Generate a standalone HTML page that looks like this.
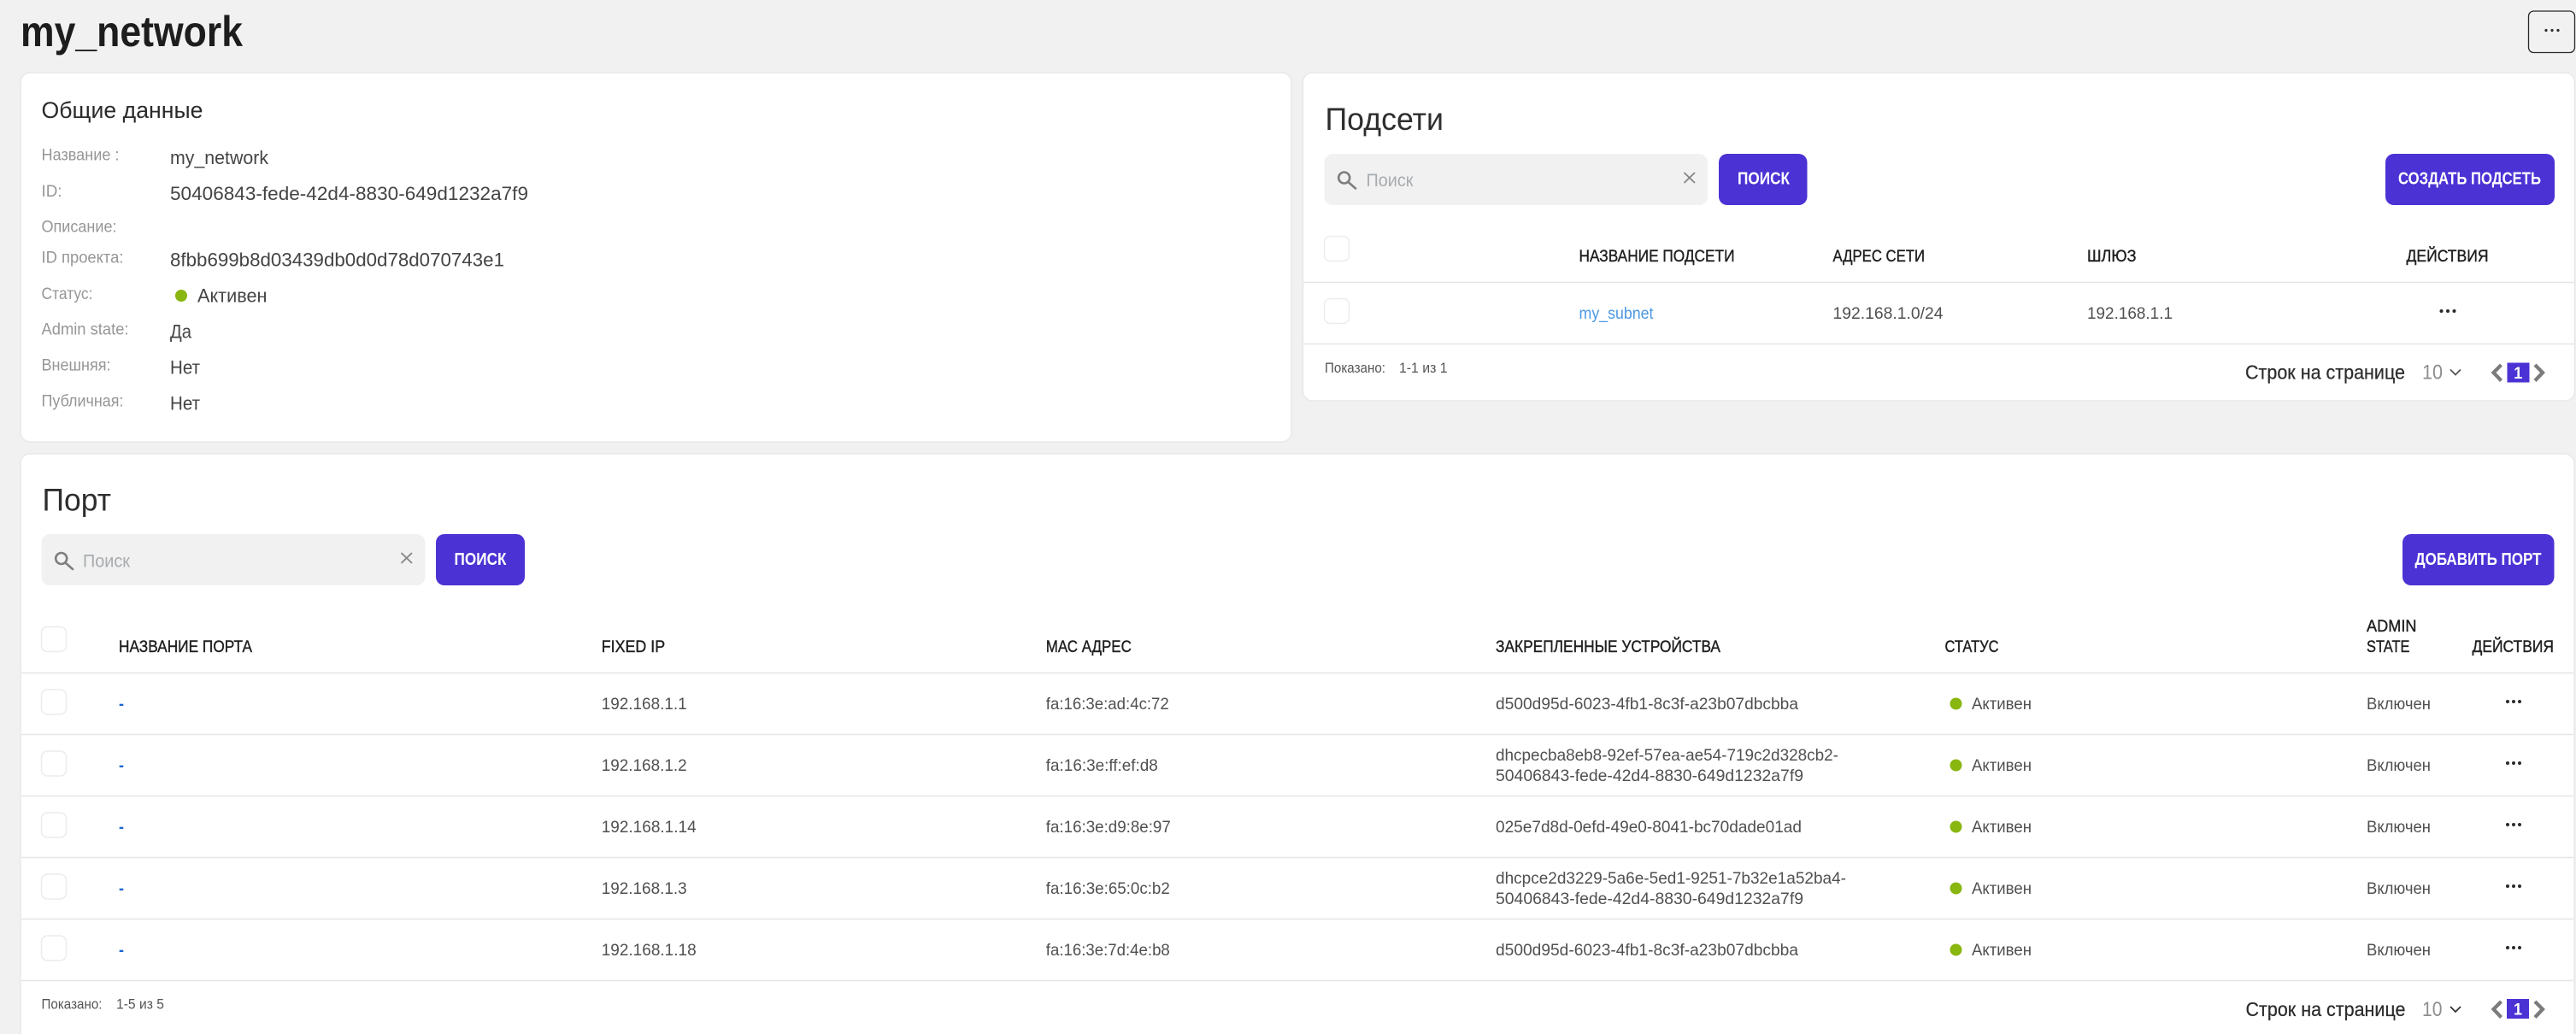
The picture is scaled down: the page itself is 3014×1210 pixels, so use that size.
<!DOCTYPE html>
<html lang="ru">
<head>
<meta charset="utf-8">
<title>my_network</title>
<style>
html,body{margin:0;padding:0;width:3014px;height:1210px;overflow:hidden;background:#f1f1f1}
svg{display:block}
text{font-family:"Liberation Sans","DejaVu Sans",sans-serif;white-space:pre}
.h1{font-size:50px;font-weight:700;fill:#1d1d1d}
.h2{font-size:27px;fill:#2a2a2a}
.h3{font-size:37px;fill:#2e2e2e}
.lb{font-size:19.5px;fill:#969696}
.v{font-size:22px;fill:#444}
.t{font-size:19.5px;fill:#505050}
.th{font-size:19.5px;fill:#1f1f1f;stroke:#1f1f1f;stroke-width:.4px}
.btn{font-size:20px;font-weight:700;fill:#fff}
.ph{font-size:21px;fill:#a8acaf}
.ft{font-size:17px;fill:#555}
.rows{font-size:23.5px;fill:#2c2c2c;stroke:#2c2c2c;stroke-width:.25px}
.n10{font-size:24px;fill:#8e8e8e}
.pg{font-size:19px;font-weight:700;fill:#fff}
.a{font-size:19.5px;fill:#4a98e4}
.dash{font-size:19px;font-weight:700;fill:#1a66d0}
.card{fill:#fff;stroke:#e8e8e8;stroke-width:1.5}
.ln{stroke:#e6e6e6;stroke-width:1.6}
.cb{fill:#fff;stroke:#ececec;stroke-width:1.5}
.sb{fill:#f1f1f1}
.pb{fill:#4b32d4}
.dot{fill:#89b60f}
.i{fill:none;stroke:#7e7e7e;stroke-width:2.6}
.ch{fill:none;stroke:#7b7b7b;stroke-width:4.2}
.dd{fill:#2a2a2a}
</style>
</head>
<body>
<svg xmlns="http://www.w3.org/2000/svg" width="3014" height="1210" viewBox="0 0 3014 1210">
<rect width="3014" height="1210" fill="#f1f1f1"/>

<text class="h1" x="24" y="54" textLength="260" lengthAdjust="spacingAndGlyphs">my_network</text>
<rect x="2958.5" y="13" width="54" height="48.5" rx="6" fill="none" stroke="#2a2a2a" stroke-width="1.3"/>
<circle class="dd" cx="2979" cy="35.5" r="1.6"/><circle class="dd" cx="2986" cy="35.5" r="1.6"/><circle class="dd" cx="2993" cy="35.5" r="1.6"/>

<!-- General card -->
<rect class="card" x="24" y="85" width="1487" height="432" rx="11"/>
<text class="h2" x="48.5" y="138" textLength="189" lengthAdjust="spacingAndGlyphs">Общие данные</text>
<text class="lb" x="48.5" y="187.5" textLength="91" lengthAdjust="spacingAndGlyphs">Название :</text>
<text class="lb" x="48.5" y="230" textLength="24" lengthAdjust="spacingAndGlyphs">ID:</text>
<text class="lb" x="48.5" y="271.5" textLength="88" lengthAdjust="spacingAndGlyphs">Описание:</text>
<text class="lb" x="48.5" y="307.5" textLength="96" lengthAdjust="spacingAndGlyphs">ID проекта:</text>
<text class="lb" x="48.5" y="350" textLength="60" lengthAdjust="spacingAndGlyphs">Статус:</text>
<text class="lb" x="48.5" y="391.5" textLength="102" lengthAdjust="spacingAndGlyphs">Admin state:</text>
<text class="lb" x="48.5" y="433.5" textLength="81" lengthAdjust="spacingAndGlyphs">Внешняя:</text>
<text class="lb" x="48.5" y="475.5" textLength="96" lengthAdjust="spacingAndGlyphs">Публичная:</text>
<text class="v" x="199" y="192" textLength="115" lengthAdjust="spacingAndGlyphs">my_network</text>
<text class="v" x="199" y="234" textLength="419" lengthAdjust="spacingAndGlyphs">50406843-fede-42d4-8830-649d1232a7f9</text>
<text class="v" x="199" y="311.5" textLength="391" lengthAdjust="spacingAndGlyphs">8fbb699b8d03439db0d0d78d070743e1</text>
<circle class="dot" cx="212" cy="346" r="7"/>
<text class="v" x="231" y="353.5" textLength="81.5" lengthAdjust="spacingAndGlyphs">Активен</text>
<text class="v" x="199" y="395.5" textLength="25" lengthAdjust="spacingAndGlyphs">Да</text>
<text class="v" x="199" y="437.5" textLength="35" lengthAdjust="spacingAndGlyphs">Нет</text>
<text class="v" x="199" y="479.5" textLength="35" lengthAdjust="spacingAndGlyphs">Нет</text>

<!-- Subnets card -->
<rect class="card" x="1524.5" y="85" width="1488" height="384" rx="11"/>
<text class="h3" x="1550.5" y="152" textLength="138.5" lengthAdjust="spacingAndGlyphs">Подсети</text>
<rect class="sb" x="1549.5" y="180" width="448.5" height="60" rx="10"/>
<circle class="i" cx="1572.7" cy="208" r="6.5"/><path class="i" d="M1577.5 213L1586 220.5" stroke-linecap="round"/>
<text class="ph" x="1598.5" y="218" textLength="55" lengthAdjust="spacingAndGlyphs">Поиск</text>
<path d="M1970.5 202L1983 214M1983 202L1970.5 214" fill="none" stroke="#848484" stroke-width="1.8"/>
<rect class="pb" x="2011" y="180" width="103.5" height="60" rx="10"/>
<text class="btn" x="2033" y="215.5" textLength="61" lengthAdjust="spacingAndGlyphs">ПОИСК</text>
<rect class="pb" x="2791" y="180" width="198" height="60" rx="10"/>
<text class="btn" x="2806" y="215.5" textLength="167" lengthAdjust="spacingAndGlyphs">СОЗДАТЬ ПОДСЕТЬ</text>
<rect class="cb" x="1549.5" y="276.5" width="29" height="29" rx="7"/>
<text class="th" x="1847.5" y="306" textLength="182" lengthAdjust="spacingAndGlyphs">НАЗВАНИЕ ПОДСЕТИ</text>
<text class="th" x="2144.5" y="306" textLength="107.5" lengthAdjust="spacingAndGlyphs">АДРЕС СЕТИ</text>
<text class="th" x="2442" y="306" textLength="57.5" lengthAdjust="spacingAndGlyphs">ШЛЮЗ</text>
<text class="th" x="2815.5" y="306" textLength="96" lengthAdjust="spacingAndGlyphs">ДЕЙСТВИЯ</text>
<path class="ln" d="M1525 330.5H3012M1525 402.5H3012"/>
<rect class="cb" x="1549.5" y="349.5" width="29" height="29" rx="7"/>
<text class="a" x="1847.5" y="373" textLength="87" lengthAdjust="spacingAndGlyphs">my_subnet</text>
<text class="t" x="2144.5" y="373" textLength="129" lengthAdjust="spacingAndGlyphs">192.168.1.0/24</text>
<text class="t" x="2442" y="373" textLength="100" lengthAdjust="spacingAndGlyphs">192.168.1.1</text>
<circle class="dd" cx="2856.5" cy="364" r="2"/><circle class="dd" cx="2864" cy="364" r="2"/><circle class="dd" cx="2871.5" cy="364" r="2"/>
<text class="ft" x="1550" y="436" textLength="71" lengthAdjust="spacingAndGlyphs">Показано:</text>
<text class="ft" x="1637" y="436" textLength="56.5" lengthAdjust="spacingAndGlyphs">1-1 из 1</text>
<text class="rows" x="2627" y="443.5" textLength="187" lengthAdjust="spacingAndGlyphs">Строк на странице</text>
<text class="n10" x="2834" y="443.5" textLength="24" lengthAdjust="spacingAndGlyphs">10</text>
<path d="M2867 432.5L2873 438.5L2879 432.5" fill="none" stroke="#555" stroke-width="1.8"/>
<path class="ch" d="M2926.5 427L2917.5 436L2926.5 445.5"/>
<rect class="pb" x="2933.5" y="424.5" width="26" height="23"/>
<text class="pg" x="2941.2" y="443" textLength="10" lengthAdjust="spacingAndGlyphs">1</text>
<path class="ch" d="M2966 427L2975 436L2966 445.5"/>

<!-- Port card -->
<path class="card" d="M24 1225V542a11 11 0 0 1 11-11H3001a11 11 0 0 1 11 11V1225Z"/>
<text class="h3" x="49.5" y="597.5" textLength="80.5" lengthAdjust="spacingAndGlyphs">Порт</text>
<rect class="sb" x="48.5" y="625" width="449" height="60" rx="10"/>
<circle class="i" cx="71.7" cy="653.5" r="6.5"/><path class="i" d="M76.5 658.5L85 666" stroke-linecap="round"/>
<text class="ph" x="97" y="663.5" textLength="55" lengthAdjust="spacingAndGlyphs">Поиск</text>
<path d="M469.5 647L482 659M482 647L469.5 659" fill="none" stroke="#848484" stroke-width="1.8"/>
<rect class="pb" x="510" y="625" width="104" height="60" rx="10"/>
<text class="btn" x="531.5" y="661" textLength="61" lengthAdjust="spacingAndGlyphs">ПОИСК</text>
<rect class="pb" x="2811" y="625" width="177.5" height="60" rx="10"/>
<text class="btn" x="2825.5" y="661" textLength="148" lengthAdjust="spacingAndGlyphs">ДОБАВИТЬ ПОРТ</text>

<rect class="cb" x="48.5" y="733.5" width="29" height="29" rx="7"/>
<text class="th" x="139" y="763" textLength="156" lengthAdjust="spacingAndGlyphs">НАЗВАНИЕ ПОРТА</text>
<text class="th" x="703.7" y="763" textLength="74.5" lengthAdjust="spacingAndGlyphs">FIXED IP</text>
<text class="th" x="1223.8" y="763" textLength="100" lengthAdjust="spacingAndGlyphs">МАС АДРЕС</text>
<text class="th" x="1750" y="763" textLength="263" lengthAdjust="spacingAndGlyphs">ЗАКРЕПЛЕННЫЕ УСТРОЙСТВА</text>
<text class="th" x="2275.5" y="763" textLength="63" lengthAdjust="spacingAndGlyphs">СТАТУС</text>
<text class="th" x="2769" y="739" textLength="58.5" lengthAdjust="spacingAndGlyphs">ADMIN</text>
<text class="th" x="2769" y="763" textLength="50.5" lengthAdjust="spacingAndGlyphs">STATE</text>
<text class="th" x="2892.5" y="763" textLength="95.5" lengthAdjust="spacingAndGlyphs">ДЕЙСТВИЯ</text>
<path class="ln" d="M25 787.5H3011M25 859.5H3011M25 931.5H3011M25 1003.5H3011M25 1075.5H3011M25 1147.5H3011"/>

<!-- row 1 -->
<rect class="cb" x="48.5" y="807" width="29" height="29" rx="7"/>
<text class="dash" x="139" y="830" textLength="6" lengthAdjust="spacingAndGlyphs">-</text>
<text class="t" x="703.7" y="830" textLength="100" lengthAdjust="spacingAndGlyphs">192.168.1.1</text>
<text class="t" x="1223.8" y="830" textLength="144" lengthAdjust="spacingAndGlyphs">fa:16:3e:ad:4c:72</text>
<text class="t" x="1750" y="830" textLength="354" lengthAdjust="spacingAndGlyphs">d500d95d-6023-4fb1-8c3f-a23b07dbcbba</text>
<circle class="dot" cx="2288.5" cy="823.5" r="7"/>
<text class="t" x="2307" y="830" textLength="70" lengthAdjust="spacingAndGlyphs">Активен</text>
<text class="t" x="2769" y="830" textLength="75" lengthAdjust="spacingAndGlyphs">Включен</text>
<circle class="dd" cx="2934" cy="821" r="2"/><circle class="dd" cx="2941" cy="821" r="2"/><circle class="dd" cx="2948" cy="821" r="2"/>

<!-- row 2 -->
<rect class="cb" x="48.5" y="879" width="29" height="29" rx="7"/>
<text class="dash" x="139" y="902" textLength="6" lengthAdjust="spacingAndGlyphs">-</text>
<text class="t" x="703.7" y="902" textLength="100" lengthAdjust="spacingAndGlyphs">192.168.1.2</text>
<text class="t" x="1223.8" y="902" textLength="131" lengthAdjust="spacingAndGlyphs">fa:16:3e:ff:ef:d8</text>
<text class="t" x="1750" y="890" textLength="401" lengthAdjust="spacingAndGlyphs">dhcpecba8eb8-92ef-57ea-ae54-719c2d328cb2-</text>
<text class="t" x="1750" y="914" textLength="360" lengthAdjust="spacingAndGlyphs">50406843-fede-42d4-8830-649d1232a7f9</text>
<circle class="dot" cx="2288.5" cy="895.5" r="7"/>
<text class="t" x="2307" y="902" textLength="70" lengthAdjust="spacingAndGlyphs">Активен</text>
<text class="t" x="2769" y="902" textLength="75" lengthAdjust="spacingAndGlyphs">Включен</text>
<circle class="dd" cx="2934" cy="893" r="2"/><circle class="dd" cx="2941" cy="893" r="2"/><circle class="dd" cx="2948" cy="893" r="2"/>

<!-- row 3 -->
<rect class="cb" x="48.5" y="951" width="29" height="29" rx="7"/>
<text class="dash" x="139" y="974" textLength="6" lengthAdjust="spacingAndGlyphs">-</text>
<text class="t" x="703.7" y="974" textLength="111" lengthAdjust="spacingAndGlyphs">192.168.1.14</text>
<text class="t" x="1223.8" y="974" textLength="146" lengthAdjust="spacingAndGlyphs">fa:16:3e:d9:8e:97</text>
<text class="t" x="1750" y="974" textLength="358" lengthAdjust="spacingAndGlyphs">025e7d8d-0efd-49e0-8041-bc70dade01ad</text>
<circle class="dot" cx="2288.5" cy="967.5" r="7"/>
<text class="t" x="2307" y="974" textLength="70" lengthAdjust="spacingAndGlyphs">Активен</text>
<text class="t" x="2769" y="974" textLength="75" lengthAdjust="spacingAndGlyphs">Включен</text>
<circle class="dd" cx="2934" cy="965" r="2"/><circle class="dd" cx="2941" cy="965" r="2"/><circle class="dd" cx="2948" cy="965" r="2"/>

<!-- row 4 -->
<rect class="cb" x="48.5" y="1023" width="29" height="29" rx="7"/>
<text class="dash" x="139" y="1046" textLength="6" lengthAdjust="spacingAndGlyphs">-</text>
<text class="t" x="703.7" y="1046" textLength="100" lengthAdjust="spacingAndGlyphs">192.168.1.3</text>
<text class="t" x="1223.8" y="1046" textLength="145" lengthAdjust="spacingAndGlyphs">fa:16:3e:65:0c:b2</text>
<text class="t" x="1750" y="1034" textLength="410" lengthAdjust="spacingAndGlyphs">dhcpce2d3229-5a6e-5ed1-9251-7b32e1a52ba4-</text>
<text class="t" x="1750" y="1058" textLength="360" lengthAdjust="spacingAndGlyphs">50406843-fede-42d4-8830-649d1232a7f9</text>
<circle class="dot" cx="2288.5" cy="1039.5" r="7"/>
<text class="t" x="2307" y="1046" textLength="70" lengthAdjust="spacingAndGlyphs">Активен</text>
<text class="t" x="2769" y="1046" textLength="75" lengthAdjust="spacingAndGlyphs">Включен</text>
<circle class="dd" cx="2934" cy="1037" r="2"/><circle class="dd" cx="2941" cy="1037" r="2"/><circle class="dd" cx="2948" cy="1037" r="2"/>

<!-- row 5 -->
<rect class="cb" x="48.5" y="1095" width="29" height="29" rx="7"/>
<text class="dash" x="139" y="1118" textLength="6" lengthAdjust="spacingAndGlyphs">-</text>
<text class="t" x="703.7" y="1118" textLength="111" lengthAdjust="spacingAndGlyphs">192.168.1.18</text>
<text class="t" x="1223.8" y="1118" textLength="145" lengthAdjust="spacingAndGlyphs">fa:16:3e:7d:4e:b8</text>
<text class="t" x="1750" y="1118" textLength="354" lengthAdjust="spacingAndGlyphs">d500d95d-6023-4fb1-8c3f-a23b07dbcbba</text>
<circle class="dot" cx="2288.5" cy="1111.5" r="7"/>
<text class="t" x="2307" y="1118" textLength="70" lengthAdjust="spacingAndGlyphs">Активен</text>
<text class="t" x="2769" y="1118" textLength="75" lengthAdjust="spacingAndGlyphs">Включен</text>
<circle class="dd" cx="2934" cy="1109" r="2"/><circle class="dd" cx="2941" cy="1109" r="2"/><circle class="dd" cx="2948" cy="1109" r="2"/>

<!-- footer -->
<text class="ft" x="48.5" y="1180.5" textLength="71" lengthAdjust="spacingAndGlyphs">Показано:</text>
<text class="ft" x="136" y="1180.5" textLength="56" lengthAdjust="spacingAndGlyphs">1-5 из 5</text>
<text class="rows" x="2627.5" y="1189" textLength="187" lengthAdjust="spacingAndGlyphs">Строк на странице</text>
<text class="n10" x="2834" y="1189" textLength="23.5" lengthAdjust="spacingAndGlyphs">10</text>
<path d="M2867 1178L2873 1184L2879 1178" fill="none" stroke="#333" stroke-width="1.8"/>
<path class="ch" d="M2926.5 1172L2917.5 1181L2926.5 1190.5"/>
<rect class="pb" x="2933" y="1169" width="26" height="23"/>
<text class="pg" x="2941" y="1187.5" textLength="10" lengthAdjust="spacingAndGlyphs">1</text>
<path class="ch" d="M2966 1172L2975 1181L2966 1190.5"/>
</svg>
</body>
</html>
